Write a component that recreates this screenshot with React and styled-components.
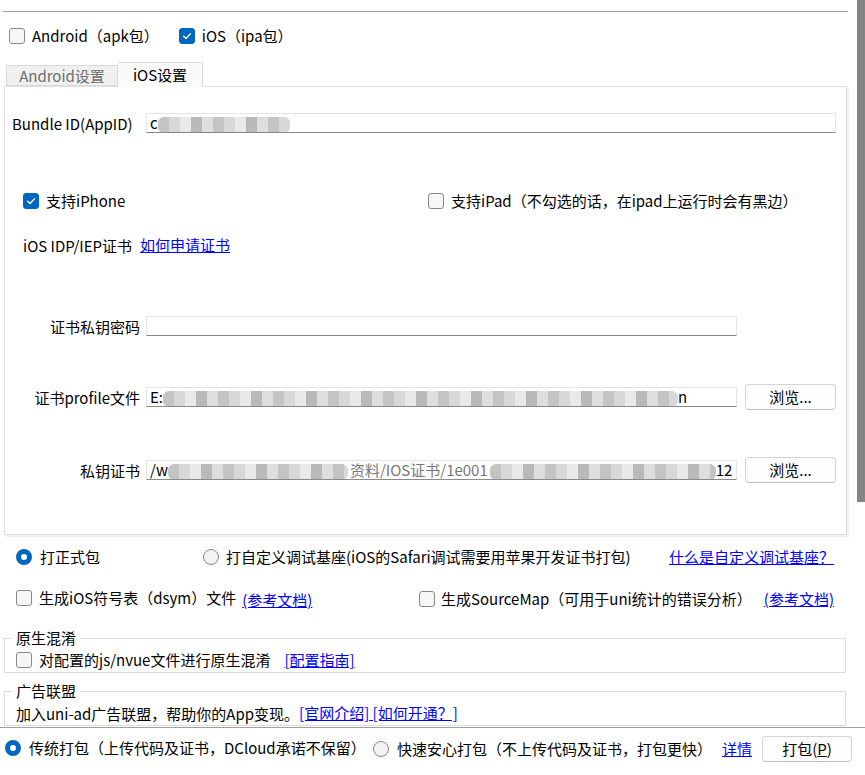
import styled, { createGlobalStyle } from 'styled-components';

const GlobalStyle = createGlobalStyle`
  html, body {
    margin: 0;
    padding: 0;
    background: #fff;
  }
  body {
    font-family: "Noto Sans CJK SC", "Noto Sans", sans-serif;
    font-size: 15px;
    color: #000;
  }
`;

function CheckMark() {
  return (
    <svg width="12" height="12" viewBox="0 0 12 12">
      <path d="M2.6 6.2 L5 8.5 L9.6 3.6" fill="none" stroke="#fff" strokeWidth="1.3" strokeLinecap="round" strokeLinejoin="round" />
    </svg>
  );
}

function Check({ checked, children, gap }) {
  return (
    <Choice $gap={gap}>
      <Box $checked={checked}>{checked && <CheckMark />}</Box>
      <span>{children}</span>
    </Choice>
  );
}

function Radio({ checked, children, gap }) {
  return (
    <Choice $gap={gap}>
      <Circle $checked={checked} />
      <span>{children}</span>
    </Choice>
  );
}

export default function App() {
  return (
    <Window>
      <GlobalStyle />
      <Main>
        <Content>
          <TopRule />
          <PackageRow>
            <Check>Android（apk包）</Check>
            <Check checked>iOS（ipa包）</Check>
          </PackageRow>

          <TabBar>
            <Tab>Android设置</Tab>
            <Tab $active>iOS设置</Tab>
          </TabBar>

          <Panel>
            <FieldRow>
              <Label $left>Bundle ID(AppID)</Label>
              <Field>
                c<Mosaic $w={132} />
              </Field>
            </FieldRow>

            <DeviceRow $space={52}>
              <Check checked>支持iPhone</Check>
              <Check>支持iPad（不勾选的话，在ipad上运行时会有黑边）</Check>
            </DeviceRow>

            <TextRow $space={18}>
              iOS IDP/IEP证书 <Link>如何申请证书</Link>
            </TextRow>

            <FieldRow $space={55}>
              <Label>证书私钥密码</Label>
              <Field $short />
            </FieldRow>

            <FieldRow $space={45}>
              <Label>证书profile文件</Label>
              <Field>
                E:<Mosaic $w={515} />n
              </Field>
              <Button>浏览...</Button>
            </FieldRow>

            <FieldRow $space={47}>
              <Label>私钥证书</Label>
              <Field>
                /w<Mosaic $w={180} />
                <Faded>资料/IOS证书/1e001</Faded>
                <Mosaic $w={226} />12
              </Field>
              <Button>浏览...</Button>
            </FieldRow>
          </Panel>

          <OptionRow $space={9} $first={187}>
            <Radio checked gap={8}>打正式包</Radio>
            <Radio>打自定义调试基座(iOS的Safari调试需要用苹果开发证书打包)</Radio>
            <Link $push>什么是自定义调试基座？</Link>
          </OptionRow>

          <OptionRow $space={16} $first={403}>
            <span>
              <Check>生成iOS符号表（dsym）文件</Check>
              <Link $gap={6}>(参考文档)</Link>
            </span>
            <Check gap={6}>生成SourceMap（可用于uni统计的错误分析）</Check>
            <Link $push>(参考文档)</Link>
          </OptionRow>

          <Group $space={16}>
            <Legend>原生混淆</Legend>
            <GroupLine>
              <Check>对配置的js/nvue文件进行原生混淆</Check>
              <Link $gap={14}>[配置指南]</Link>
            </GroupLine>
          </Group>

          <Group $space={8}>
            <Legend>广告联盟</Legend>
            <GroupLine>
              加入uni-ad广告联盟，帮助你的App变现。<Link>[官网介绍] [如何开通？]</Link>
            </GroupLine>
          </Group>
        </Content>
        <Scrollbar>
          <Thumb />
        </Scrollbar>
      </Main>

      <BottomBar>
        <BottomItem>
          <Radio checked gap={8}>传统打包（上传代码及证书，DCloud承诺不保留）</Radio>
        </BottomItem>
        <Radio gap={8}>快速安心打包（不上传代码及证书，打包更快）</Radio>
        <Link $push>详情</Link>
        <PackButton>
          打包(<u>P</u>)
        </PackButton>
      </BottomBar>
    </Window>
  );
}

const Window = styled.div`
  width: 865px;
  height: 775px;
  display: flex;
  flex-direction: column;
  overflow: hidden;
  background: #fff;
`;

const Main = styled.div`
  flex: none;
  height: 727px;
  display: flex;
  overflow: hidden;
`;

const Content = styled.div`
  width: 857px;
  flex: none;
  display: flex;
  flex-direction: column;
`;

const Scrollbar = styled.div`
  width: 8px;
  flex: none;
`;

const Thumb = styled.div`
  height: 502px;
  background: #858585;
`;

const TopRule = styled.div`
  margin: 11px 9px 0 3px;
  border-top: 1px solid #a0a0a0;
`;

const Choice = styled.span`
  display: inline-flex;
  align-items: center;
  gap: ${(p) => (p.$gap ?? 7)}px;
  white-space: nowrap;
  line-height: 20px;
`;

const Box = styled.span`
  width: 16px;
  height: 16px;
  box-sizing: border-box;
  border-radius: 3px;
  flex: none;
  display: inline-flex;
  align-items: center;
  justify-content: center;
  border: 1px solid ${(p) => (p.$checked ? '#0067c0' : '#8a8a8a')};
  background: ${(p) => (p.$checked ? '#0067c0' : '#f6f6f6')};
`;

const Circle = styled.span`
  width: 16px;
  height: 16px;
  box-sizing: border-box;
  border-radius: 50%;
  flex: none;
  border: ${(p) => (p.$checked ? '5px solid #0067c0' : '1px solid #8a8a8a')};
  background: ${(p) => (p.$checked ? '#fff' : '#f3f3f3')};
`;

const PackageRow = styled.div`
  display: flex;
  align-items: center;
  gap: 20px;
  height: 20px;
  margin-top: 14px;
  padding-left: 9px;
`;

const TabBar = styled.div`
  display: flex;
  align-items: flex-end;
  height: 24px;
  margin-top: 16px;
  padding-left: 6px;
  position: relative;
  z-index: 1;
`;

const Tab = styled.div`
  box-sizing: border-box;
  height: ${(p) => (p.$active ? 25 : 21)}px;
  width: ${(p) => (p.$active ? 85 : 112)}px;
  margin-bottom: ${(p) => (p.$active ? -1 : 0)}px;
  display: flex;
  align-items: center;
  justify-content: center;
  border: 1px solid #dadada;
  border-bottom: ${(p) => (p.$active ? 'none' : '1px solid #dadada')};
  border-left: ${(p) => (p.$active ? 'none' : '1px solid #dadada')};
  background: ${(p) => (p.$active ? '#fafafa' : '#f0f0f0')};
  color: ${(p) => (p.$active ? '#000' : '#6e6e6e')};
  line-height: 20px;
`;

const Panel = styled.div`
  box-sizing: border-box;
  height: 449px;
  margin: 0 10px 0 4px;
  padding: 23px 10px 0 7px;
  border: 1px solid #dfdfdf;
  box-shadow: 2px 2px 0 #f0f0f0;
  background: #fff;
  display: flex;
  flex-direction: column;
`;

const FieldRow = styled.div`
  display: flex;
  align-items: center;
  height: 26px;
  margin-top: ${(p) => p.$space || 0}px;
`;

const Label = styled.span`
  width: 128px;
  margin-right: 6px;
  flex: none;
  text-align: ${(p) => (p.$left ? 'left' : 'right')};
  white-space: nowrap;
`;

const Field = styled.div`
  box-sizing: border-box;
  height: 20px;
  ${(p) => (p.$short ? 'width: 591px; flex: none;' : 'flex: 1;')}
  min-width: 0;
  display: flex;
  align-items: center;
  padding: 0 3px;
  border: 1px solid #e4e4e4;
  border-bottom-color: #8a8a8a;
  background: #fff;
  white-space: nowrap;
  overflow: hidden;
  line-height: 18px;
`;

const Mosaic = styled.span`
  display: inline-block;
  flex: none;
  width: ${(p) => p.$w}px;
  height: 16px;
  margin-top: 4px;
  border-radius: 6px;
  background: repeating-linear-gradient(
    90deg,
    #c4c4c4 0 11px,
    #d8d8d8 11px 22px,
    #e9e9e9 22px 33px,
    #b9b9b9 33px 44px,
    #dedede 44px 55px
  );
`;

const Faded = styled.span`
  color: #777;
  margin: 0 2px;
`;

const Button = styled.button`
  box-sizing: border-box;
  width: 91px;
  height: 26px;
  margin-left: 8px;
  flex: none;
  border: 1px solid #d4d4d4;
  border-bottom-color: #bdbdbd;
  border-radius: 4px;
  background: #fdfdfd;
  font: inherit;
  color: #000;
  line-height: 20px;
  padding: 0;
`;

const DeviceRow = styled.div`
  display: grid;
  grid-template-columns: 405px auto;
  align-items: center;
  height: 26px;
  margin-top: ${(p) => p.$space || 0}px;
  padding-left: 11px;
`;

const TextRow = styled.div`
  display: flex;
  align-items: center;
  gap: 8px;
  height: 26px;
  margin-top: ${(p) => p.$space || 0}px;
  padding-left: 11px;
  white-space: nowrap;
`;

const Link = styled.a`
  color: #0000ff;
  text-decoration: underline;
  white-space: nowrap;
  cursor: pointer;
  line-height: 20px;
  margin-left: ${(p) => (p.$push ? 'auto' : `${p.$gap || 0}px`)};
`;

const OptionRow = styled.div`
  display: grid;
  grid-template-columns: ${(p) => p.$first}px auto 1fr;
  align-items: center;
  height: 26px;
  margin-top: ${(p) => p.$space || 0}px;
  padding: 0 23px 0 16px;
  white-space: nowrap;
  & > a {
    justify-self: end;
  }
`;

const Group = styled.fieldset`
  margin: ${(p) => p.$space}px 11px 0 4px;
  padding: 0 11px 2px 11px;
  border: 1px solid #dcdcdc;
  min-width: 0;
`;

const Legend = styled.legend`
  padding: 0 4px;
  margin-left: -4px;
  line-height: 20px;
`;

const GroupLine = styled.div`
  display: flex;
  align-items: center;
  height: 20px;
  margin-top: 2px;
  white-space: nowrap;
`;

const BottomBar = styled.div`
  flex: 1;
  display: flex;
  align-items: center;
  border-top: 1px solid #a0a0a0;
  padding: 0 13px 5px 5px;
  white-space: nowrap;
`;

const BottomItem = styled.div`
  width: 368px;
  flex: none;
`;

const PackButton = styled(Button)`
  width: 90px;
  margin-left: 10px;
`;
